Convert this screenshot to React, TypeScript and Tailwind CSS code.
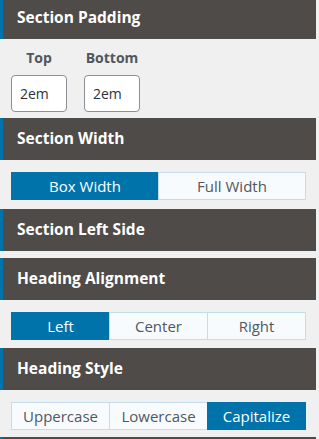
import React from 'react';

const font = { fontFamily: '"Open Sans", "Noto Sans", sans-serif' };

const Header: React.FC<{ title: string; className?: string }> = ({ title, className = '' }) => (
  <div className={`h-[42px] flex items-center bg-[#4f4b49] border-l-[3px] border-[#0073aa] pl-[14px] ${className}`}>
    <span className="text-[15.5px] font-bold text-white">{title}</span>
  </div>
);

const Toggle: React.FC<{ options: string[]; active: number }> = ({ options, active }) => (
  <div className="flex h-[28px] w-[295px] ml-[11px]">
    {options.map((o, i) => (
      <div
        key={o}
        className={`flex-1 flex items-center justify-center text-[15px] border ${
          i === active
            ? 'bg-[#0073aa] border-[#0073aa] text-white'
            : 'bg-[#f7fbfe] border-[#c3dcee] text-[#50575e]'
        } ${i > 0 ? '-ml-px' : ''}`}
      >
        {o}
      </div>
    ))}
  </div>
);

export default function App() {
  return (
    <div className="w-[319px] h-[439px] overflow-hidden bg-[#f0f0f0]" style={font}>
      <div className="w-[316px] -mt-[3px]">
        <Header title="Section Padding" />
        <div className="h-[79px] flex gap-[17px] pl-[11px] pt-[10px]">
          {['Top', 'Bottom'].map((l) => (
            <div key={l} className="flex flex-col items-center w-[56px]">
              <span className="text-[14px] font-bold text-[#50575e] leading-[18px]">{l}</span>
              <div className="mt-[8px] w-[56px] h-[37px] bg-white border border-[#8c8f94] rounded-[4px] flex items-center pl-[8px] text-[14px] text-[#2c3338]">
                2em
              </div>
            </div>
          ))}
        </div>
        <Header title="Section Width" />
        <div className="h-[49px] pt-[12px]">
          <Toggle options={['Box Width', 'Full Width']} active={0} />
        </div>
        <Header title="Section Left Side" />
        <div className="h-[7px]" />
        <Header title="Heading Alignment" />
        <div className="h-[48px] pt-[12px]">
          <Toggle options={['Left', 'Center', 'Right']} active={0} />
        </div>
        <Header title="Heading Style" />
        <div className="h-[47px] pt-[12px]">
          <Toggle options={['Uppercase', 'Lowercase', 'Capitalize']} active={2} />
        </div>
        <div className="h-[42px] bg-[#4f4b49] border-l-[3px] border-[#0073aa]" />
      </div>
    </div>
  );
}
